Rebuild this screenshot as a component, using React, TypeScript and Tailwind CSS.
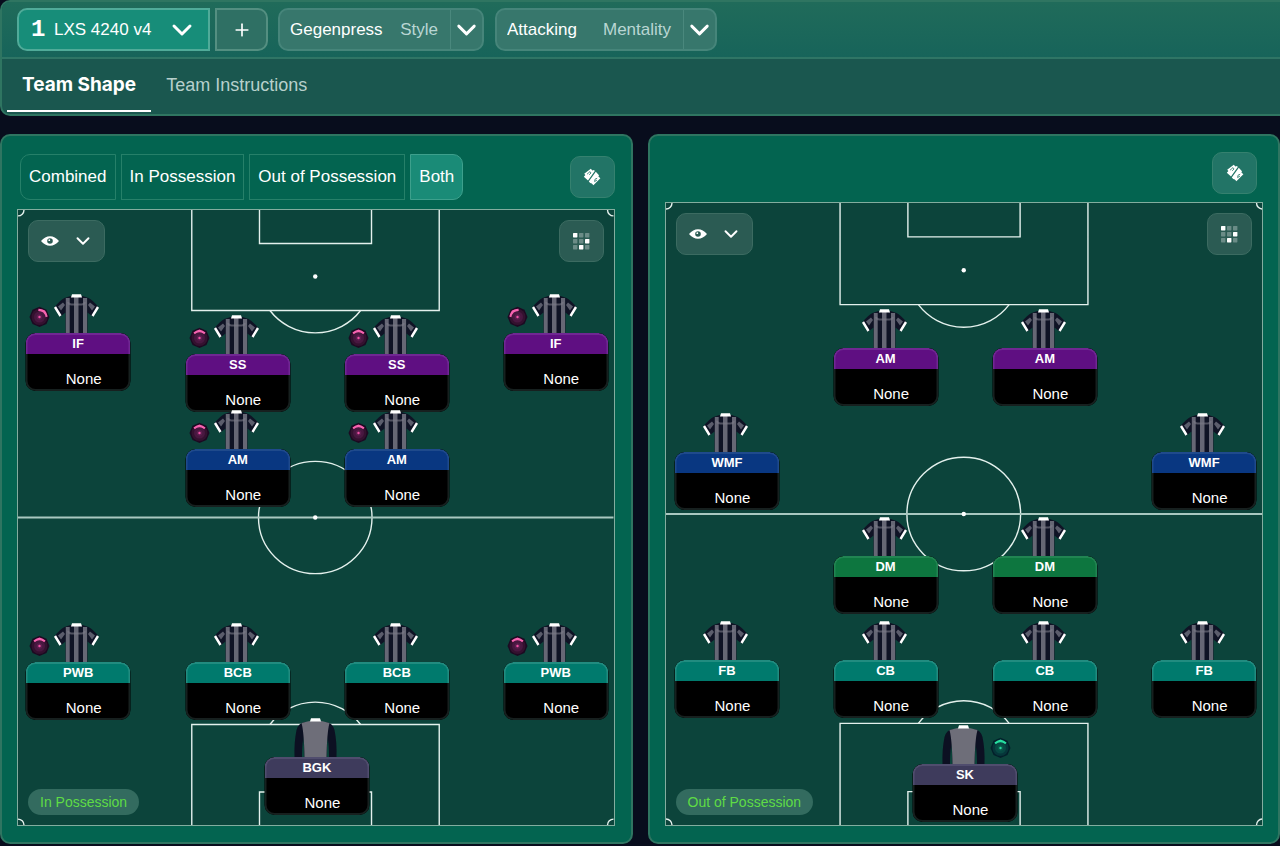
import { useState } from 'react';
import clsx from 'clsx';
import { ChevronDown, Plus } from 'lucide-react';

type Band = 'attack' | 'midfield' | 'holding' | 'defence' | 'keeper';
type Duty = 'up' | 'upRight' | 'upLeft' | 'support';

interface Player {
    role: string;
    band: Band;
    x: number;
    y: number;
    duty?: Duty;
}

const bandColor: Record<Band, string> = {
    attack: 'bg-[#5f0f82] border-[#702793]',
    midfield: 'bg-[#093781] border-[#1f4a8c]',
    holding: 'bg-[#0d763f] border-[#218452]',
    defence: 'bg-[#007a6d] border-[#218c80]',
    keeper: 'bg-[#3e3b5c] border-[#504d6e]',
};

// Positions are percentages of the pitch
const inPossession: Player[] = [
    { role: 'IF', band: 'attack', x: 10.1, y: 13.6, duty: 'upRight' },
    { role: 'SS', band: 'attack', x: 36.9, y: 17, duty: 'up' },
    { role: 'SS', band: 'attack', x: 63.6, y: 17, duty: 'up' },
    { role: 'IF', band: 'attack', x: 90.3, y: 13.6, duty: 'upLeft' },
    { role: 'AM', band: 'midfield', x: 36.9, y: 32.6, duty: 'up' },
    { role: 'AM', band: 'midfield', x: 63.6, y: 32.6, duty: 'up' },
    { role: 'PWB', band: 'defence', x: 10.1, y: 67.1, duty: 'up' },
    { role: 'BCB', band: 'defence', x: 36.9, y: 67.1 },
    { role: 'BCB', band: 'defence', x: 63.6, y: 67.1 },
    { role: 'PWB', band: 'defence', x: 90.3, y: 67.1, duty: 'up' },
    { role: 'BGK', band: 'keeper', x: 50.2, y: 82.6 },
];

const outOfPossession: Player[] = [
    { role: 'AM', band: 'attack', x: 36.9, y: 17 },
    { role: 'AM', band: 'attack', x: 63.6, y: 17 },
    { role: 'WMF', band: 'midfield', x: 10.3, y: 33.7 },
    { role: 'WMF', band: 'midfield', x: 90.3, y: 33.7 },
    { role: 'DM', band: 'holding', x: 36.9, y: 50.5 },
    { role: 'DM', band: 'holding', x: 63.6, y: 50.5 },
    { role: 'FB', band: 'defence', x: 10.3, y: 67.2 },
    { role: 'CB', band: 'defence', x: 36.9, y: 67.2 },
    { role: 'CB', band: 'defence', x: 63.6, y: 67.2 },
    { role: 'FB', band: 'defence', x: 90.3, y: 67.2 },
    { role: 'SK', band: 'keeper', x: 50.2, y: 83.9, duty: 'support' },
];

function Shirt() {
    return (
        <svg viewBox="0 0 46 39" className="h-[39px] w-[46px]" aria-hidden="true">
            <path d="M17 2 L11 4 Q7 6 1 13 L7 22.500 L12 18.500 V39 H34 V18.500 L39 22.500 L45 13 Q39 6 35 4 L29 2 Z" fill="#0f1325" />
            <path d="M12.300 4 H16.200 V39 H12.300 Z M20.500 3 H25 V39 H20.500 Z M29.500 4 H33.600 V39 H29.500 Z" fill="#666775" />
            <path d="M4.500 12.500 L9.500 8.500 L11.500 11 L7.500 16.500 Z M41.500 12.500 L36.500 8.500 L34.500 11 L38.500 16.500 Z" fill="#5b5d6c" />
            <path d="M14.500 8 Q15 10.500 18 10.500 H28 Q31 10.500 31.500 8" fill="none" stroke="#7b7c88" strokeWidth="1.800" opacity=".6" />
            <path d="M1.500 13 L7 22 M44.500 13 L39 22" stroke="#fff" strokeWidth="2.400" />
            <path d="M18.500 .3 H27.500 L28.500 3.500 H17.500 Z" fill="#fff" />
        </svg>
    );
}

function KeeperShirt() {
    return (
        <svg viewBox="0 0 46 39" className="h-[39px] w-[46px]" aria-hidden="true">
            <path d="M12 4 Q6 5 4 12 Q1.500 24 2 39 H9.500 L11 19 L12 39 H34 L35 19 L36.500 39 H44 Q44.500 24 42 12 Q40 5 34 4 Z" fill="#0c1022" />
            <path d="M10.200 22 L9.500 39 H11.500 Z M35.800 22 L36.500 39 H34.500 Z" fill="#0c443b" />
            <path d="M17 3 L9 5 Q11.500 14 12 39 H34 Q34.500 14 37 5 L29 3 Z" fill="#6e6e79" />
            <path d="M18.500 .3 H27.500 L28.500 3.500 H17.500 Z" fill="#fff" />
        </svg>
    );
}

function DutyBadge({ duty }: { duty: Duty }) {
    const green = duty === 'support';
    const turn = duty === 'upRight' ? 40 : duty === 'upLeft' ? -40 : 0;
    return (
        <svg viewBox="0 0 22 22" className="size-[22px]" aria-hidden="true">
            <path d="M11 .8 L18 3.800 L21 11 L18 18 L11 21 L4 18 L1 11 L4 3.800 Z" fill={green ? '#04202b' : '#1c0a22'} />
            <circle cx="11" cy="11" r="8" fill={green ? '#06363a' : '#34112f'} />
            <circle cx="11" cy="11" r="5.500" fill={green ? '#084a44' : '#481840'} />
            <circle cx="11" cy="11" r="2.800" fill={green ? '#0a5a4c' : '#5c1e4e'} />
            <circle cx="11" cy="11" r="1.200" fill={green ? '#29d69b' : '#f04fa5'} />
            <path
                d="M5 5.400 Q7.500 3.200 11 2.400 Q14.500 3.200 17 5.400 L15.800 7.200 Q13.500 5.400 11 5.200 Q8.500 5.400 6.200 7.200 Z"
                fill={green ? '#27dfa0' : '#f763b0'}
                transform={`rotate(${turn} 11 11)`}
            />
        </svg>
    );
}

function PlayerToken({ player }: { player: Player }) {
    return (
        <button
            type="button"
            className="absolute w-[105px] -translate-x-1/2 text-white"
            style={{ left: `${player.x}%`, top: `${player.y}%` }}
        >
            <span className="relative flex justify-center pr-[3px]">
                {player.band === 'keeper' ? <KeeperShirt /> : <Shirt />}
                {player.duty && (
                    <span className={clsx('absolute top-3', player.duty === 'support' ? 'right-[6px]' : 'left-[3px]')}>
                        <DutyBadge duty={player.duty} />
                    </span>
                )}
            </span>
            <span className="block h-[58px] overflow-hidden rounded-[10px] bg-black">
                <span className={clsx('block h-[21px] rounded-t-[10px] border-2 border-b-0 text-center text-[13px] leading-[17px] font-bold', bandColor[player.band])}>
                    {player.role}
                </span>
                <span className="block h-[37px] rounded-b-[10px] border-2 border-t-0 border-[#17201f] pt-[15px] pl-[11px] text-center text-[15px] leading-5">
                    None
                </span>
            </span>
        </button>
    );
}

function PitchLines() {
    return (
        <svg
            viewBox="0 0 598 624"
            preserveAspectRatio="none"
            className="absolute inset-0 h-full w-full"
            fill="none"
            stroke="#e4f1ed"
            strokeWidth="1.400"
            aria-hidden="true"
        >
            <path d="M174.500 0 V102 H423 V0 M242.500 0 V34 H355 V0" />
            <path d="M174.500 624 V522 H423 V624 M242.500 624 V590.500 H355 V624" />
            <path d="M253 102 A57 57 0 0 0 344 102" />
            <path d="M253 522 A57 57 0 0 1 344 522" />
            <circle cx="298.500" cy="312" r="57" />
            <path d="M0 312 H598" stroke="#a9c8c0" strokeWidth="2" />
            <circle cx="298.500" cy="312" r="2.200" fill="#fff" stroke="none" />
            <circle cx="298.500" cy="67.500" r="2.200" fill="#fff" stroke="none" />
            <path d="M6 0 A6 6 0 0 1 0 6 M592 0 A6 6 0 0 0 598 6 M0 618 A6 6 0 0 1 6 624 M598 618 A6 6 0 0 0 592 624" />
        </svg>
    );
}

function EyeIcon() {
    return (
        <svg viewBox="0 0 18 10" className="h-[10px] w-[18px]" aria-hidden="true">
            <path fillRule="evenodd" fill="#fff" d="M0 5 Q4 .2 9 .2 Q14 .2 18 5 Q14 9.800 9 9.800 Q4 9.800 0 5 Z M9 2.200 A2.800 2.800 0 1 0 9 7.800 A2.800 2.800 0 1 0 9 2.200 Z" />
            <circle cx="8.300" cy="4.200" r=".9" fill="#fff" />
        </svg>
    );
}

function DotGridIcon() {
    const lit = [0, 5, 7];
    return (
        <svg viewBox="0 0 17 17" className="size-[17px]" fill="#fff" aria-hidden="true">
            {Array.from({ length: 9 }, (_, i) => (
                <rect key={i} x={(i % 3) * 6} y={Math.floor(i / 3) * 6} width="4.400" height="4.400" rx=".6" opacity={lit.includes(i) ? 1 : 0.3} />
            ))}
        </svg>
    );
}

function QuickPickIcon() {
    return (
        <svg viewBox="0 0 18 18" className="size-[18px]" aria-hidden="true">
            <path d="M7.800 .8 L9.400 2.600 L11 2 L11.800 3 L5 12.600 L.8 8.800 L2.400 7 L1.200 5.800 Z" fill="#fff" />
            <path d="M12.800 3.800 L14.400 5.600 L16 7.200 L15.400 8.400 L17.400 10.200 L10.400 17.200 L8.800 15.400 L7.200 15 L5.800 13.400 Z" fill="#fff" />
            <path d="M4 6.200 L7 3.600 L8 5 L6.200 6.800 M14.200 10.200 L12 11.200 L11.600 13.600 L14 12" fill="none" stroke="#227466" strokeWidth=".8" />
        </svg>
    );
}

function IconButton({ label, tone, children }: { label: string; tone: 'panel' | 'pitch'; children: React.ReactNode }) {
    return (
        <button
            type="button"
            aria-label={label}
            className={clsx(
                'flex h-[42px] w-[45px] items-center justify-center rounded-[10px] border',
                tone === 'panel' ? 'border-[#35816f] bg-[#227466]' : 'border-[#3c6b61] bg-[#2b5b53]'
            )}
        >
            {children}
        </button>
    );
}

function Pitch({ label, players }: { label: string; players: Player[] }) {
    return (
        <div className="relative flex flex-1 flex-col justify-between border border-[#83ad9f] bg-[#0c443b] p-[10px]">
            <PitchLines />
            <div className="relative flex items-start justify-between">
                <button
                    type="button"
                    aria-label="View options"
                    className="flex h-[42px] w-[77px] items-center justify-between rounded-[10px] border border-[#3c6b61] bg-[#2b5b53] pr-[10px] pl-3 text-white"
                >
                    <EyeIcon />
                    <ChevronDown className="size-[22px]" strokeWidth={2.1} />
                </button>
                <IconButton label="Pitch grid" tone="pitch">
                    <DotGridIcon />
                </IconButton>
            </div>
            {players.map((p, i) => (
                <PlayerToken key={i} player={p} />
            ))}
            <span className="relative self-start rounded-full bg-[#336b5f] px-3 text-[14px] leading-[26px] text-[#5fdc45]">{label}</span>
        </div>
    );
}

function HeaderSelect({ value, caption, className }: { value: string; caption: string; className: string }) {
    return (
        <label className={clsx('relative block', className)}>
            <select
                defaultValue={value}
                className="h-[43px] w-full appearance-none rounded-[10px] border-2 border-[#46857a] bg-[#37776c] pl-[10px] text-[17px] text-white"
            >
                <option>{value}</option>
            </select>
            <span className="pointer-events-none absolute inset-y-[2px] right-[2px] flex items-center text-[17px] text-[#b9d6d3]">
                <span className="pr-3">{caption}</span>
                <span className="flex h-full w-8 items-center justify-center border-l border-[#4a887d] text-white">
                    <ChevronDown className="size-8" strokeWidth={2.2} />
                </span>
            </span>
        </label>
    );
}

const views = ['Combined', 'In Possession', 'Out of Possession', 'Both'];

export default function App() {
    const [tab, setTab] = useState('Team Shape');
    const [view, setView] = useState('Both');

    return (
        <div className="flex min-h-screen flex-col bg-[#080d1d] pb-[2px] font-['Liberation_Sans',Arial,sans-serif] text-white">
            <header className="rounded-l-[10px] border-2 border-r-0 border-[#2f7561] bg-[#1a574f]">
                <div className="flex h-[57px] items-center rounded-tl-[8px] border-b-2 border-[#2f7565] bg-linear-to-b from-[#206b5a] to-[#17645a] pl-[15px]">
                    <label className="relative block w-[193px]">
                        <span className="pointer-events-none absolute inset-y-0 left-[14px] flex items-center font-['Liberation_Mono',monospace] text-[24px] font-bold">1</span>
                        <select
                            defaultValue="LXS 4240 v4"
                            className="h-[43px] w-full appearance-none rounded-l-[10px] border-2 border-[#50ab99] bg-[#178d79] pl-[35px] text-[17px] text-white"
                        >
                            <option>LXS 4240 v4</option>
                        </select>
                        <span className="pointer-events-none absolute inset-y-0 right-3 flex items-center">
                            <ChevronDown className="size-8" strokeWidth={2.2} />
                        </span>
                    </label>
                    <button
                        type="button"
                        aria-label="Add tactic"
                        className="ml-[5px] flex h-[43px] w-[53px] items-center justify-center rounded-r-[10px] border-2 border-[#548f81] bg-[#2f7064]"
                    >
                        <Plus className="size-5" strokeWidth={2} />
                    </button>
                    <HeaderSelect value="Gegenpress" caption="Style" className="ml-[10px] w-[206px]" />
                    <HeaderSelect value="Attacking" caption="Mentality" className="ml-[11px] w-[222px]" />
                </div>
                <div role="tablist" className="flex h-[55px] items-start pl-[5px]">
                    {['Team Shape', 'Team Instructions'].map((t) => (
                        <button
                            key={t}
                            type="button"
                            role="tab"
                            aria-selected={tab === t}
                            onClick={() => setTab(t)}
                            className={clsx(
                                'h-[53px] border-b-2 px-[15px] leading-[52px]',
                                tab === t ? "border-white font-['Inter',sans-serif] text-[19px] font-bold" : 'border-transparent text-[18px] text-[#b7d0cc]'
                            )}
                        >
                            {t}
                        </button>
                    ))}
                </div>
            </header>

            <main className="mt-[18px] grid flex-1 grid-cols-2 gap-[15px]">
                <section className="flex flex-col rounded-[10px] border-2 border-[#2f7561] bg-[#036450] pr-4 pb-4 pl-[15px]">
                    <div className="flex items-center justify-between pt-[18px] pb-[9px] pl-[3px]">
                        <div className="flex gap-[5px]">
                            {views.map((v) => (
                                <button
                                    key={v}
                                    type="button"
                                    aria-pressed={view === v}
                                    onClick={() => setView(v)}
                                    className={clsx(
                                        'h-[46px] border px-2 text-[17px] whitespace-nowrap first:rounded-l-[10px] last:rounded-r-[10px]',
                                        view === v ? 'border-[#3da08c] bg-[#1a8b77]' : 'border-[#268069]'
                                    )}
                                >
                                    {v}
                                </button>
                            ))}
                        </div>
                        <IconButton label="Quick pick" tone="panel">
                            <QuickPickIcon />
                        </IconButton>
                    </div>
                    <Pitch label="In Possession" players={inPossession} />
                </section>
                <section className="flex flex-col rounded-[10px] border-2 border-[#2f7561] bg-[#036450] px-[15px] pb-4">
                    <div className="flex justify-end pt-4 pr-[6px] pb-2">
                        <IconButton label="Quick pick" tone="panel">
                            <QuickPickIcon />
                        </IconButton>
                    </div>
                    <Pitch label="Out of Possession" players={outOfPossession} />
                </section>
            </main>
        </div>
    );
}
